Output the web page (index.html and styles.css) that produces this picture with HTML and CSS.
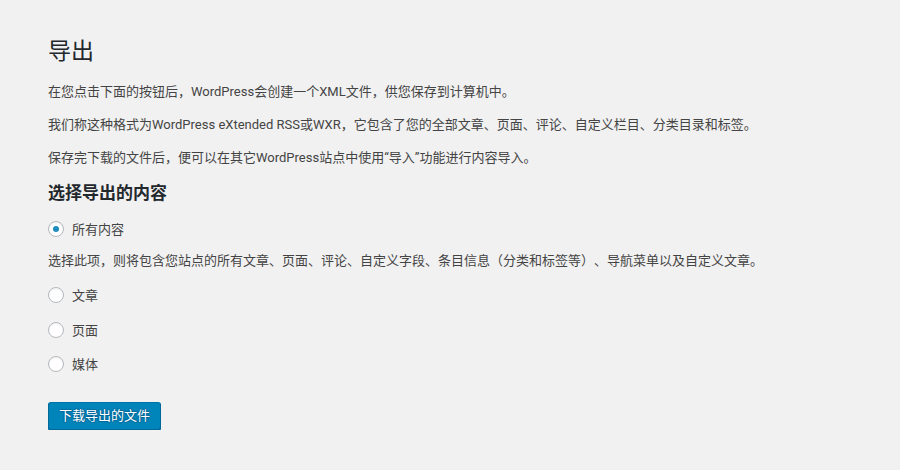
FILE: index.html
```html
<!DOCTYPE html>
<html lang="zh-CN">
<head>
<meta charset="utf-8">
<title>导出</title>
<link rel="stylesheet" href="styles.css">
</head>
<body>
<div class="wrap">
  <h1 class="title">导出</h1>
  <p class="para first">在您点击下面的按钮后，WordPress会创建一个XML文件，供您保存到计算机中。</p>
  <p class="para">我们称这种格式为WordPress eXtended RSS或WXR，它包含了您的全部文章、页面、评论、自定义栏目、分类目录和标签。</p>
  <p class="para">保存完下载的文件后，便可以在其它WordPress站点中使用“导入”功能进行内容导入。</p>
  <h2 class="subtitle">选择导出的内容</h2>
  <label class="radio-row r-first"><span class="radio checked"></span><span class="label">所有内容</span></label>
  <p class="desc">选择此项，则将包含您站点的所有文章、页面、评论、自定义字段、条目信息（分类和标签等）、导航菜单以及自定义文章。</p>
  <label class="radio-row r-a"><span class="radio"></span><span class="label">文章</span></label>
  <label class="radio-row r-b"><span class="radio"></span><span class="label">页面</span></label>
  <label class="radio-row r-c"><span class="radio"></span><span class="label">媒体</span></label>
  <div class="actions"><button class="button">下载导出的文件</button></div>
</div>
</body>
</html>
```
FILE: styles.css
```css
html, body {
  margin: 0;
  padding: 0;
  background: #f1f1f1;
}
body {
  font-family: Roboto, "Noto Sans CJK SC", sans-serif;
  color: #444;
  font-size: 13px;
  text-spacing-trim: space-all;
}
.wrap {
  display: flex;
  flex-direction: column;
  align-items: flex-start;
  padding: 37px 0 0 48px;
}
.title {
  margin: 0;
  font-size: 23px;
  line-height: 30px;
  font-weight: 400;
  color: #23282d;
}
.para {
  margin: 0 0 14px 0;
  line-height: 19px;
}
.para.first {
  margin-top: 15px;
}
.subtitle {
  margin: 1px 0 0 0;
  font-size: 17px;
  line-height: 22px;
  font-weight: 600;
  color: #23282d;
}
.radio-row {
  display: flex;
  align-items: center;
  gap: 8px;
  height: 16px;
}
.r-first { margin-top: 17px; }
.r-a { margin-top: 17px; }
.r-b { margin-top: 19px; }
.r-c { margin-top: 18px; }
.radio {
  box-sizing: border-box;
  width: 16px;
  height: 16px;
  border: 1px solid #b4b9be;
  border-radius: 50%;
  background: #fff;
  box-shadow: inset 0 1px 2px rgba(0,0,0,0.07);
  display: flex;
  align-items: center;
  justify-content: center;
}
.radio.checked::before {
  content: "";
  width: 6px;
  height: 6px;
  border-radius: 50%;
  background: #1e8cbe;
}
.label {
  line-height: 19px;
}
.desc {
  margin: 14px 0 0 0;
  line-height: 19px;
}
.actions {
  margin-top: 30px;
}
.button {
  font-family: Roboto, "Noto Sans CJK SC", sans-serif;
  font-size: 13px;
  line-height: 26px;
  height: 28px;
  padding: 0 10px;
  margin: 0;
  color: #fff;
  background: #0085ba;
  border: 1px solid;
  border-color: #0073aa #006799 #006799;
  border-radius: 3px;
  box-shadow: 0 1px 0 #006799;
  text-shadow: 0 -1px 1px #006799, 1px 0 1px #006799, 0 1px 1px #006799, -1px 0 1px #006799;
  cursor: pointer;
}
```
